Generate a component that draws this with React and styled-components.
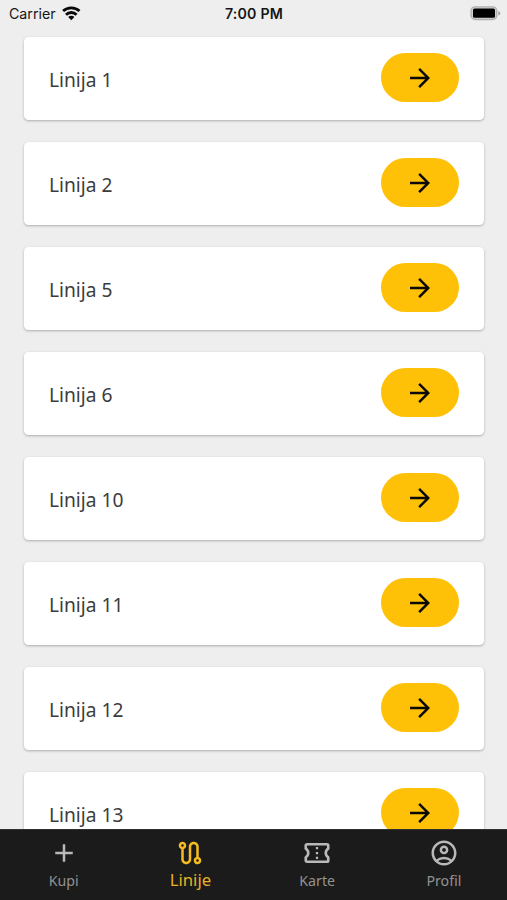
import React from "react";
import styled, { createGlobalStyle } from "styled-components";
import {
  MdAdd,
  MdArrowForward,
  MdOutlineAccountCircle,
  MdOutlineRoute,
} from "react-icons/md";

const GlobalStyle = createGlobalStyle`
  * { box-sizing: border-box; }
  body { margin: 0; background: #eeeeee; }
`;

const Screen = styled.div`
  display: flex;
  flex-direction: column;
  width: 507px;
  height: 900px;
  overflow: hidden;
  background: #eeeeee;
  font-family: "Noto Sans", sans-serif;
`;

const StatusBar = styled.header`
  display: grid;
  grid-template-columns: 1fr auto 1fr;
  align-items: center;
  flex: none;
  height: 27px;
  padding: 0 6px 0 9px;
  font-family: Inter, sans-serif;
  font-size: 14.2px;
  color: #151515;
`;

const Carrier = styled.div`
  display: flex;
  align-items: center;
  gap: 6px;
`;

const Clock = styled.div`
  font-weight: 600;
  letter-spacing: 0.2px;
  margin-right: 2px;
`;

const Battery = styled.svg`
  justify-self: end;
  display: block;
`;

const LineList = styled.main`
  flex: 1;
  min-height: 0;
  overflow: hidden;
  display: flex;
  flex-direction: column;
  gap: 22px;
  padding: 9.5px 23px 0 24px;
`;

const LineCard = styled.article`
  display: flex;
  align-items: center;
  justify-content: space-between;
  flex: none;
  height: 83px;
  padding: 0 25px;
  border-radius: 4.5px;
  background: #ffffff;
  box-shadow: 0 1px 2.5px rgba(0, 0, 0, 0.28);
`;

const LineName = styled.span`
  font-size: 19.2px;
  line-height: 28px;
  color: #3c3c3c;
  padding-top: 3px;
`;

const OpenButton = styled.button`
  display: flex;
  align-items: center;
  justify-content: center;
  width: 78px;
  height: 49px;
  margin-bottom: 1px;
  padding: 0;
  border: 0;
  border-radius: 25px;
  background: #ffc107;
  color: #0b0903;
  font-size: 30px;
`;

const TabBar = styled.nav`
  display: grid;
  grid-template-columns: repeat(4, 1fr);
  flex: none;
  height: 71px;
  background: #1b1b1b;
  border-top: 1px solid #303030;
`;

const Tab = styled.a`
  display: flex;
  flex-direction: column;
  align-items: center;
  padding-top: 7.5px;
  padding-left: 0.6px;
  color: ${(p) => (p.$active ? "#f5bd22" : "#b9b9b9")};
  font-size: 30px;

  svg { display: block; flex: none; }
`;

const TabLabel = styled.span`
  margin-top: ${(p) => (p.$active ? "3px" : "2px")};
  font-size: ${(p) => (p.$active ? "16.7px" : "14.2px")};
  line-height: ${(p) => (p.$active ? "18px" : "22px")};
  color: ${(p) => (p.$active ? "#e5b323" : "#929292")};
`;

function TicketIcon() {
  return (
    <svg width="30" height="30" viewBox="0 0 24 24" fill="none" stroke="currentColor" strokeWidth="2.1">
      <path
        strokeLinejoin="round"
        d="M3 8.5V6a1 1 0 0 1 1-1h16a1 1 0 0 1 1 1v2.5c-1.2.8-2 2-2 3.5s.8 2.7 2 3.5V18a1 1 0 0 1-1 1H4a1 1 0 0 1-1-1v-2.5c1.2-.8 2-2 2-3.5s-.8-2.7-2-3.5z"
      />
      <path stroke="none" fill="currentColor" d="M11.1 7.2h1.8V9h-1.8zM11.1 11.1h1.8v1.8h-1.8zM11.1 15h1.8v1.8h-1.8z" />
    </svg>
  );
}

const lines = [1, 2, 5, 6, 10, 11, 12, 13];

const tabs = [
  { label: "Kupi", Icon: MdAdd },
  { label: "Linije", Icon: MdOutlineRoute, active: true },
  { label: "Karte", Icon: TicketIcon },
  { label: "Profil", Icon: MdOutlineAccountCircle },
];

function WifiIcon() {
  return (
    <svg width="19" height="15" viewBox="0 0 19 15" fill="none" stroke="#090909" strokeWidth="2.8">
      <path d="M1.1 5.1a11.8 11.8 0 0 1 16.4 0" />
      <path d="M4 8.7a7.5 7.5 0 0 1 10.6 0" />
      <path d="M9.3 14.2 6.2 11.1a4.4 4.4 0 0 1 6.2 0z" fill="#090909" stroke="none" />
    </svg>
  );
}

function BatteryIcon() {
  return (
    <Battery width="31" height="15" viewBox="0 0 31 15">
      <rect x="1.1" y="0.9" width="25.6" height="12.6" rx="4" fill="#d2d2d2" stroke="#b0b0b0" strokeWidth="1.4" />
      <rect x="3" y="2.6" width="22" height="9.2" rx="1.6" fill="#000" />
      <path d="M28.3 5q2 .7 2 2.3t-2 2.3z" fill="#a0a0a0" />
    </Battery>
  );
}

export default function App() {
  return (
    <Screen>
      <GlobalStyle />
      <StatusBar>
        <Carrier>
          Carrier
          <WifiIcon />
        </Carrier>
        <Clock>7:00 PM</Clock>
        <BatteryIcon />
      </StatusBar>
      <LineList>
        {lines.map((line) => (
          <LineCard key={line}>
            <LineName>Linija {line}</LineName>
            <OpenButton aria-label={`Linija ${line}`}>
              <MdArrowForward />
            </OpenButton>
          </LineCard>
        ))}
      </LineList>
      <TabBar>
        {tabs.map(({ label, Icon, active }) => (
          <Tab key={label} $active={active}>
            <Icon />
            <TabLabel $active={active}>{label}</TabLabel>
          </Tab>
        ))}
      </TabBar>
    </Screen>
  );
}
